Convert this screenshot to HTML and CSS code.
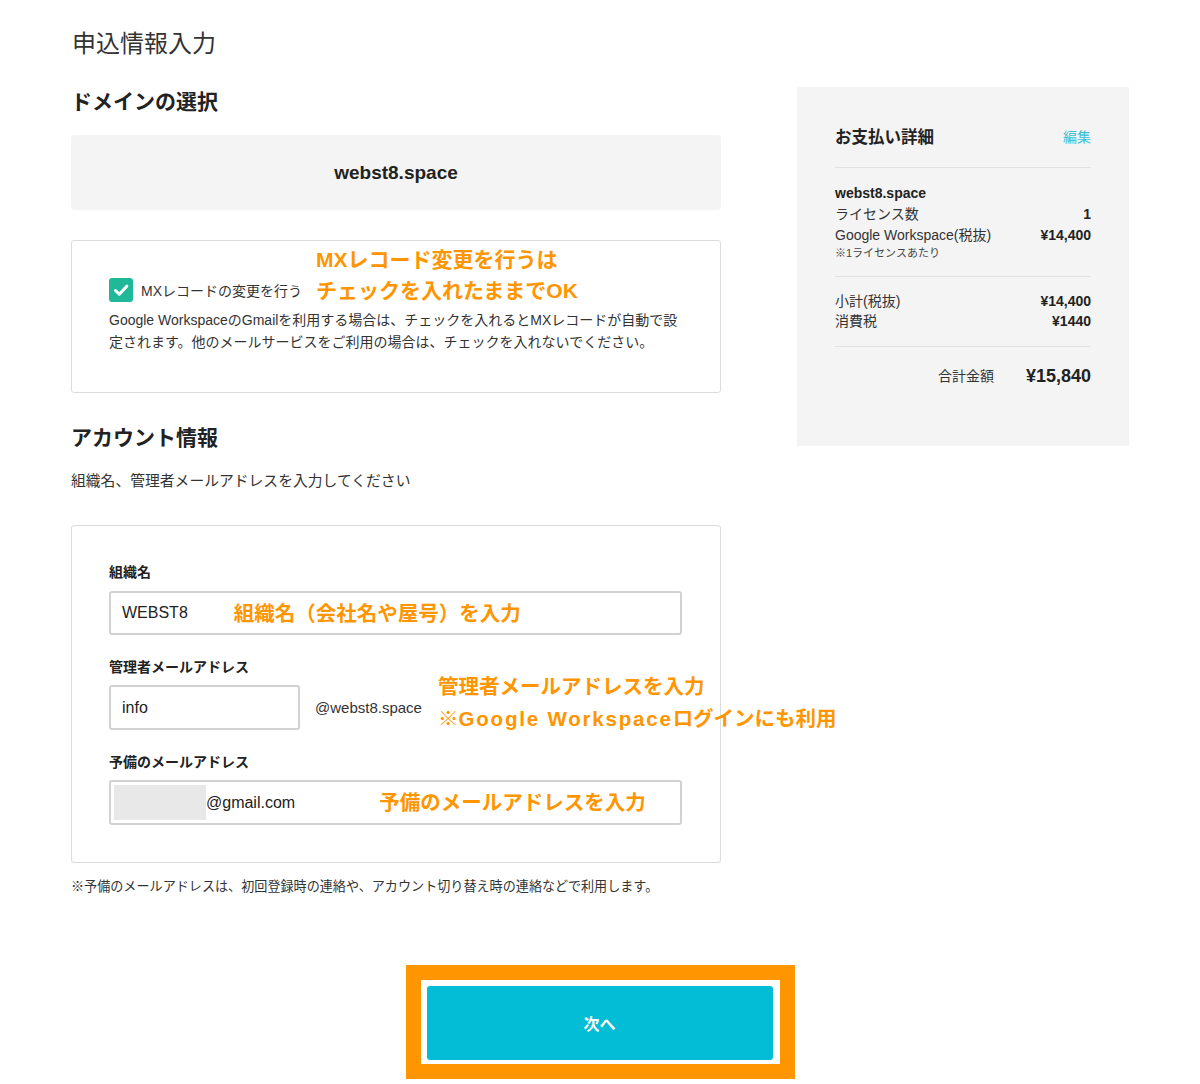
FILE: index.html
```html
<!DOCTYPE html>
<html lang="ja">
<head>
    <meta charset="UTF-8">
    <meta name="viewport" content="width=device-width, initial-scale=1.0">
    <title>申込情報入力</title>
    <link rel="stylesheet" href="styles.css">
</head>
<body>

<div class="page">
    <div class="columns">
        <main class="form-col">
            <h1 class="page-title">申込情報入力</h1>

            <h2 class="section-title">ドメインの選択</h2>
            <div class="domain-box">webst8.space</div>

            <div class="panel mx-panel">
                <div class="memo mx-memo">MXレコード変更を行うは<br>チェックを入れたままでOK</div>
                <label class="check-row">
                    <span class="checkbox">
                        <svg width="24" height="24" viewBox="0 0 24 24"><polyline points="6.5,12.5 10.3,16.3 17.8,8.2" fill="none" stroke="#fff" stroke-width="3" stroke-linecap="round" stroke-linejoin="round"/></svg>
                    </span>
                    MXレコードの変更を行う
                </label>
                <p class="mx-desc">Google WorkspaceのGmailを利用する場合は、チェックを入れるとMXレコードが自動で設定されます。他のメールサービスをご利用の場合は、チェックを入れないでください。</p>
            </div>

            <h2 class="section-title account-title">アカウント情報</h2>
            <p class="lead">組織名、管理者メールアドレスを入力してください</p>

            <div class="panel account-panel">
                <div class="form-group">
                    <div class="field-label">組織名</div>
                    <div class="field">
                        <span class="field-value">WEBST8</span>
                        <span class="memo org-memo">組織名（会社名や屋号）を入力</span>
                    </div>
                </div>
                <div class="form-group">
                    <div class="field-label">管理者メールアドレス</div>
                    <div class="admin-row">
                        <div class="field field-short"><span class="field-value">info</span></div>
                        <span class="domain-suffix">@webst8.space</span>
                        <div class="memo admin-memo">管理者メールアドレスを入力<br>※<span class="memo-latin">Google Workspace</span>ログインにも利用</div>
                    </div>
                </div>
                <div class="form-group">
                    <div class="field-label">予備のメールアドレス</div>
                    <div class="field field-masked">
                        <span class="mask"></span>
                        <span class="field-value">@gmail.com</span>
                        <span class="memo sub-memo">予備のメールアドレスを入力</span>
                    </div>
                </div>
            </div>

            <p class="footnote">※予備のメールアドレスは、初回登録時の連絡や、アカウント切り替え時の連絡などで利用します。</p>
        </main>

        <aside class="summary">
            <div class="summary-head">
                <span class="summary-title">お支払い詳細</span>
                <a class="edit-link" href="#">編集</a>
            </div>
            <div class="summary-block">
                <div class="item-name">webst8.space</div>
                <div class="row"><span>ライセンス数</span><b>1</b></div>
                <div class="row"><span>Google Workspace(税抜)</span><b>¥14,400</b></div>
                <div class="per-license">※1ライセンスあたり</div>
            </div>
            <div class="summary-block subtotal">
                <div class="row"><span>小計(税抜)</span><b>¥14,400</b></div>
                <div class="row"><span>消費税</span><b>¥1440</b></div>
            </div>
            <div class="total">
                <span class="total-label">合計金額</span>
                <span class="total-price">¥15,840</span>
            </div>
        </aside>
    </div>

    <div class="actions">
        <div class="next-frame">
            <button class="next-btn">次へ</button>
        </div>
    </div>
</div>

</body>
</html>
```

FILE: styles.css
```css
body {
    margin: 0;
    font-family: "Liberation Sans", "Noto Sans CJK JP", sans-serif;
    color: #222;
    background-color: #fff;
}
.page {
    width: 1200px;
}
.columns {
    display: flex;
    align-items: flex-start;
    gap: 76px;
    padding-left: 71px;
}
.form-col {
    width: 650px;
}
.page-title {
    margin: 26px 0 0 1px;
    font-size: 24px;
    line-height: 36px;
    font-weight: 400;
    color: #333;
}
.section-title {
    margin: 25px 0 0;
    font-size: 21px;
    line-height: 30px;
    font-weight: 700;
    color: #222;
}
.domain-box {
    margin-top: 18px;
    height: 75px;
    display: flex;
    align-items: center;
    justify-content: center;
    background-color: #f4f4f4;
    border-radius: 4px;
    font-size: 19px;
    font-weight: 700;
}
.panel {
    position: relative;
    border: 1px solid #dcdcdc;
    border-radius: 3px;
}
.mx-panel {
    margin-top: 30px;
    padding: 37px 38px 39px 37px;
}
.memo {
    color: #ff9500;
    font-size: 21px;
    font-weight: 700;
    line-height: 31px;
    white-space: nowrap;
}
.memo-latin {
    letter-spacing: 1.8px;
}
.mx-memo {
    position: absolute;
    left: 244px;
    top: 3px;
}
.check-row {
    display: flex;
    align-items: center;
    height: 24px;
    font-size: 14px;
    color: #333;
}
.checkbox {
    width: 24px;
    height: 24px;
    margin-right: 8px;
    border-radius: 3px;
    background-color: #1fb899;
}
.checkbox svg {
    display: block;
}
.mx-desc {
    margin: 7px 0 0;
    font-size: 14px;
    line-height: 22px;
    color: #333;
}
.account-title {
    margin-top: 30px;
}
.lead {
    margin: 18px 0 0;
    font-size: 14.8px;
    line-height: 21px;
    color: #333;
}
.account-panel {
    margin-top: 33px;
    padding: 36px 38px 37px 37px;
}
.form-group + .form-group {
    margin-top: 22px;
}
.field-label {
    font-size: 14px;
    line-height: 20px;
    font-weight: 700;
    margin-bottom: 8px;
}
.form-group:first-child .field-label {
    margin-bottom: 9px;
}
.field {
    box-sizing: border-box;
    height: 45px;
    display: flex;
    align-items: center;
    padding-left: 11px;
    border: 2px solid #d2d2d2;
    border-radius: 3px;
    background-color: #fff;
}
.form-group:first-child .field {
    height: 44px;
}
.field-value {
    font-size: 16px;
    color: #222;
}
.org-memo {
    margin-left: 46px;
    font-size: 20.5px;
}
.admin-row {
    position: relative;
    display: flex;
    align-items: center;
}
.field-short {
    width: 191px;
}
.domain-suffix {
    margin-left: 15px;
    font-size: 15px;
    color: #333;
}
.admin-memo {
    position: absolute;
    left: 329px;
    top: -14px;
    line-height: 32px;
    font-size: 20.5px;
}
.field-masked {
    padding-left: 3px;
}
.mask {
    width: 92px;
    height: 35px;
    background-color: #e8e8e8;
}
.sub-memo {
    margin-left: 84px;
    font-size: 20.5px;
}
.footnote {
    margin: 15px 0 0;
    font-size: 13.1px;
    line-height: 18px;
    color: #333;
}
.summary {
    box-sizing: border-box;
    width: 332px;
    margin-top: 87px;
    padding: 38px 38px 56px;
    background-color: #f4f4f4;
}
.summary-head {
    display: flex;
    justify-content: space-between;
    align-items: center;
    line-height: 24px;
    padding-bottom: 18px;
    border-bottom: 1px solid #e2e2e2;
}
.summary-title {
    font-size: 16.5px;
    font-weight: 700;
}
.edit-link {
    font-size: 14px;
    color: #3dbfd6;
    text-decoration: none;
}
.summary-block {
    padding: 15px 0 15px;
    border-bottom: 1px solid #e2e2e2;
}
.subtotal {
    padding-top: 14px;
}
.item-name {
    font-size: 14px;
    font-weight: 700;
    line-height: 20px;
    margin-bottom: 1px;
}
.row {
    display: flex;
    justify-content: space-between;
    font-size: 14px;
    line-height: 21px;
    color: #333;
}
.subtotal .row {
    line-height: 20px;
}
.row b {
    color: #222;
}
.per-license {
    font-size: 11px;
    line-height: 16px;
    margin-top: -1px;
    color: #444;
}
.total {
    display: flex;
    justify-content: flex-end;
    align-items: center;
    gap: 32px;
    padding-top: 15px;
    line-height: 28px;
}
.total-label {
    font-size: 14px;
    color: #333;
}
.total-price {
    font-size: 18px;
    font-weight: 700;
}
.actions {
    display: flex;
    justify-content: center;
    margin-top: 69px;
}
.next-frame {
    padding: 6px 7px 4px 6px;
    border: 15px solid #ff9500;
}
.next-btn {
    display: block;
    width: 346px;
    height: 74px;
    border: none;
    border-radius: 3px;
    background-color: #02bdd5;
    color: #fff;
    font-family: "Liberation Sans", "Noto Sans CJK JP", sans-serif;
    font-size: 16px;
    font-weight: 700;
    cursor: pointer;
}
```
